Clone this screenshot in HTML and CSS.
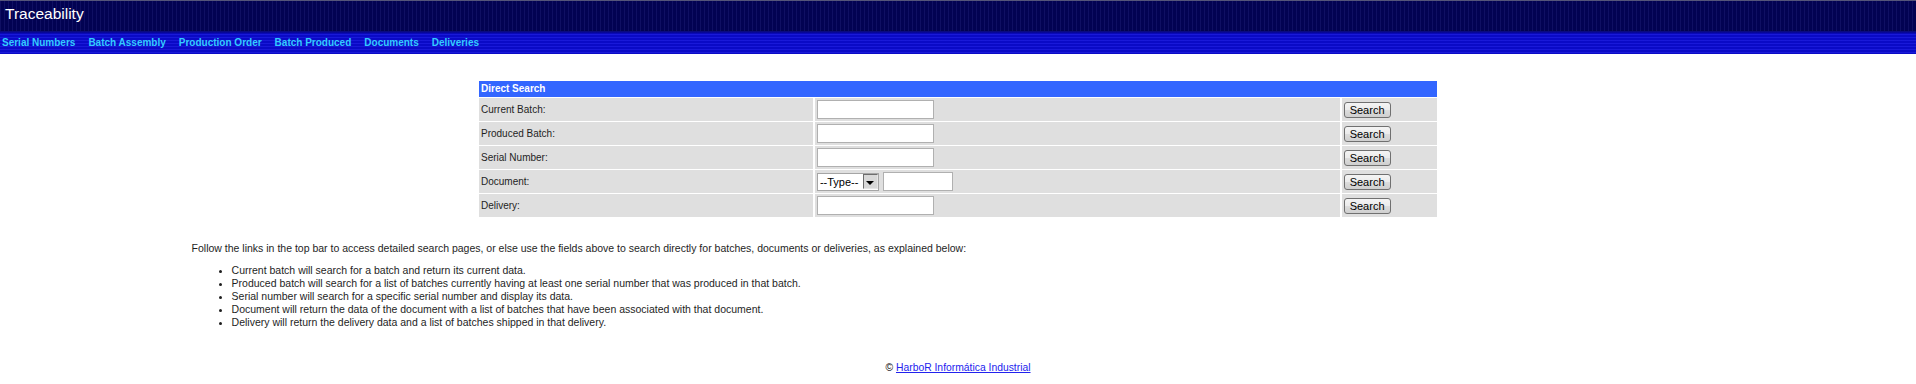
FILE: index.html
```html
<!DOCTYPE html>
<html lang="en">
<head>
<meta charset="utf-8">
<title>Traceability</title>
<link rel="stylesheet" href="styles.css">
</head>
<body>
<header class="topbar">
  <span class="title">Traceability</span>
</header>
<nav class="navbar">
  <a href="#">Serial Numbers</a>
  <a href="#">Batch Assembly</a>
  <a href="#">Production Order</a>
  <a href="#">Batch Produced</a>
  <a href="#">Documents</a>
  <a href="#">Deliveries</a>
</nav>
<main class="content">
  <table class="search">
    <colgroup><col class="c1"><col class="c2"><col class="c3"></colgroup>
    <thead>
      <tr><th colspan="3">Direct Search</th></tr>
    </thead>
    <tbody>
      <tr>
        <td>Current Batch:</td>
        <td><input type="text" class="field"></td>
        <td><button type="button" class="btn">Search</button></td>
      </tr>
      <tr>
        <td>Produced Batch:</td>
        <td><input type="text" class="field"></td>
        <td><button type="button" class="btn">Search</button></td>
      </tr>
      <tr>
        <td>Serial Number:</td>
        <td><input type="text" class="field"></td>
        <td><button type="button" class="btn">Search</button></td>
      </tr>
      <tr>
        <td>Document:</td>
        <td>
          <div class="doc">
            <span class="select"><select><option>--Type--</option></select><span class="arrow"></span></span>
            <input type="text" class="field short">
          </div>
        </td>
        <td><button type="button" class="btn">Search</button></td>
      </tr>
      <tr>
        <td>Delivery:</td>
        <td><input type="text" class="field"></td>
        <td><button type="button" class="btn">Search</button></td>
      </tr>
    </tbody>
  </table>

  <section class="help">
    <p>Follow the links in the top bar to access detailed search pages, or else use the fields above to search directly for batches, documents or deliveries, as explained below:</p>
    <ul>
      <li>Current batch will search for a batch and return its current data.</li>
      <li>Produced batch will search for a list of batches currently having at least one serial number that was produced in that batch.</li>
      <li>Serial number will search for a specific serial number and display its data.</li>
      <li>Document will return the data of the document with a list of batches that have been associated with that document.</li>
      <li>Delivery will return the delivery data and a list of batches shipped in that delivery.</li>
    </ul>
  </section>

  <footer class="footer">© <a href="#">HarboR Informática Industrial</a></footer>
</main>
</body>
</html>
```
FILE: styles.css
```css
html, body {
  margin: 0;
  padding: 0;
  background: #ffffff;
}
body {
  font-family: "Liberation Sans", Arial, sans-serif;
  font-size: 10px;
  color: #1e1e1e;
}
.topbar {
  height: 30px;
  border-top: 1px solid #55557a;
  background-color: #020252;
  background-image: repeating-linear-gradient(90deg, rgba(40,40,130,0.35) 0 1px, transparent 1px 4px);
  padding-left: 5px;
}
.title {
  color: #ffffff;
  font-size: 15.5px;
  line-height: 26px;
}
.navbar {
  height: 23px;
  display: flex;
  align-items: center;
  gap: 13px;
  padding-left: 2px;
  background-color: #0a0ac6;
  background-image:
    linear-gradient(180deg, rgba(2,2,82,0.8) 0, rgba(2,2,82,0) 3px),
    repeating-linear-gradient(180deg, rgba(40,40,235,0.5) 0 1px, transparent 1px 3px);
}
.navbar a {
  color: #33ccff;
  font-weight: bold;
  font-size: 10px;
  text-decoration: none;
}
.content {
  padding-top: 26px;
}
.search {
  width: calc(50% + 4px);
  margin: 0 auto;
  border-collapse: separate;
  border-spacing: 2px 1px;
}
.c1 { width: 35%; }
.c2 { width: 55%; }
.c3 { width: 10%; }
.search th {
  background: #3366ff;
  color: #ffffff;
  font-weight: bold;
  text-align: left;
  height: 16px;
  line-height: 16px;
  padding: 0 2px;
}
.search td {
  background: #dfdfdf;
  height: 23px;
  padding: 0 2px;
  vertical-align: middle;
}
.field {
  display: block;
  box-sizing: border-box;
  width: 117px;
  height: 19px;
  margin: 0;
  border: 1px solid #b0b0b0;
  background: #ffffff;
  padding: 0 2px;
}
.field.short {
  width: 70px;
}
.btn {
  display: block;
  box-sizing: border-box;
  width: 47px;
  height: 16px;
  margin: 0;
  padding: 0;
  border: 1px solid #707070;
  border-radius: 3px;
  background: linear-gradient(180deg, #f4f4f4 0%, #ebebeb 50%, #dddddd 50%, #cfcfcf 100%);
  font-family: "Liberation Sans", Arial, sans-serif;
  font-size: 11px;
  line-height: 14px;
  color: #000000;
}
.doc {
  display: flex;
  align-items: center;
  gap: 4px;
}
.select {
  display: inline-flex;
  align-items: center;
  box-sizing: border-box;
  width: 62px;
  height: 18px;
  border: 1px solid #a5a5a5;
  background: #ffffff;
}
.select select {
  appearance: none;
  -webkit-appearance: none;
  border: 0;
  background: transparent;
  font-family: "Liberation Sans", Arial, sans-serif;
  font-size: 11px;
  color: #000000;
  padding: 0 0 0 2px;
  margin: 0;
  width: 45px;
  height: 16px;
  outline: none;
}
.arrow {
  box-sizing: border-box;
  width: 15px;
  height: 15px;
  margin-left: auto;
  border: 1px solid;
  border-color: #6d6d6d #e6e6e6 #e6e6e6 #6d6d6d;
  background: #d8d8d8;
  display: flex;
  align-items: center;
  justify-content: center;
  padding-top: 2px;
}
.arrow::before {
  content: "";
  border-left: 4px solid transparent;
  border-right: 4px solid transparent;
  border-top: 4px solid #000000;
}
.help {
  margin: 24px 10% 0;
  line-height: 13px;
  font-size: 10.5px;
}
.help p {
  margin: 0;
}
.help ul {
  margin: 9px 0 0;
  padding-left: 40px;
}
.footer {
  text-align: center;
  margin-top: 32px;
  line-height: 13px;
  font-size: 10.35px;
  color: #000000;
}
.footer a {
  color: #2222ee;
  text-decoration: underline;
}
```
